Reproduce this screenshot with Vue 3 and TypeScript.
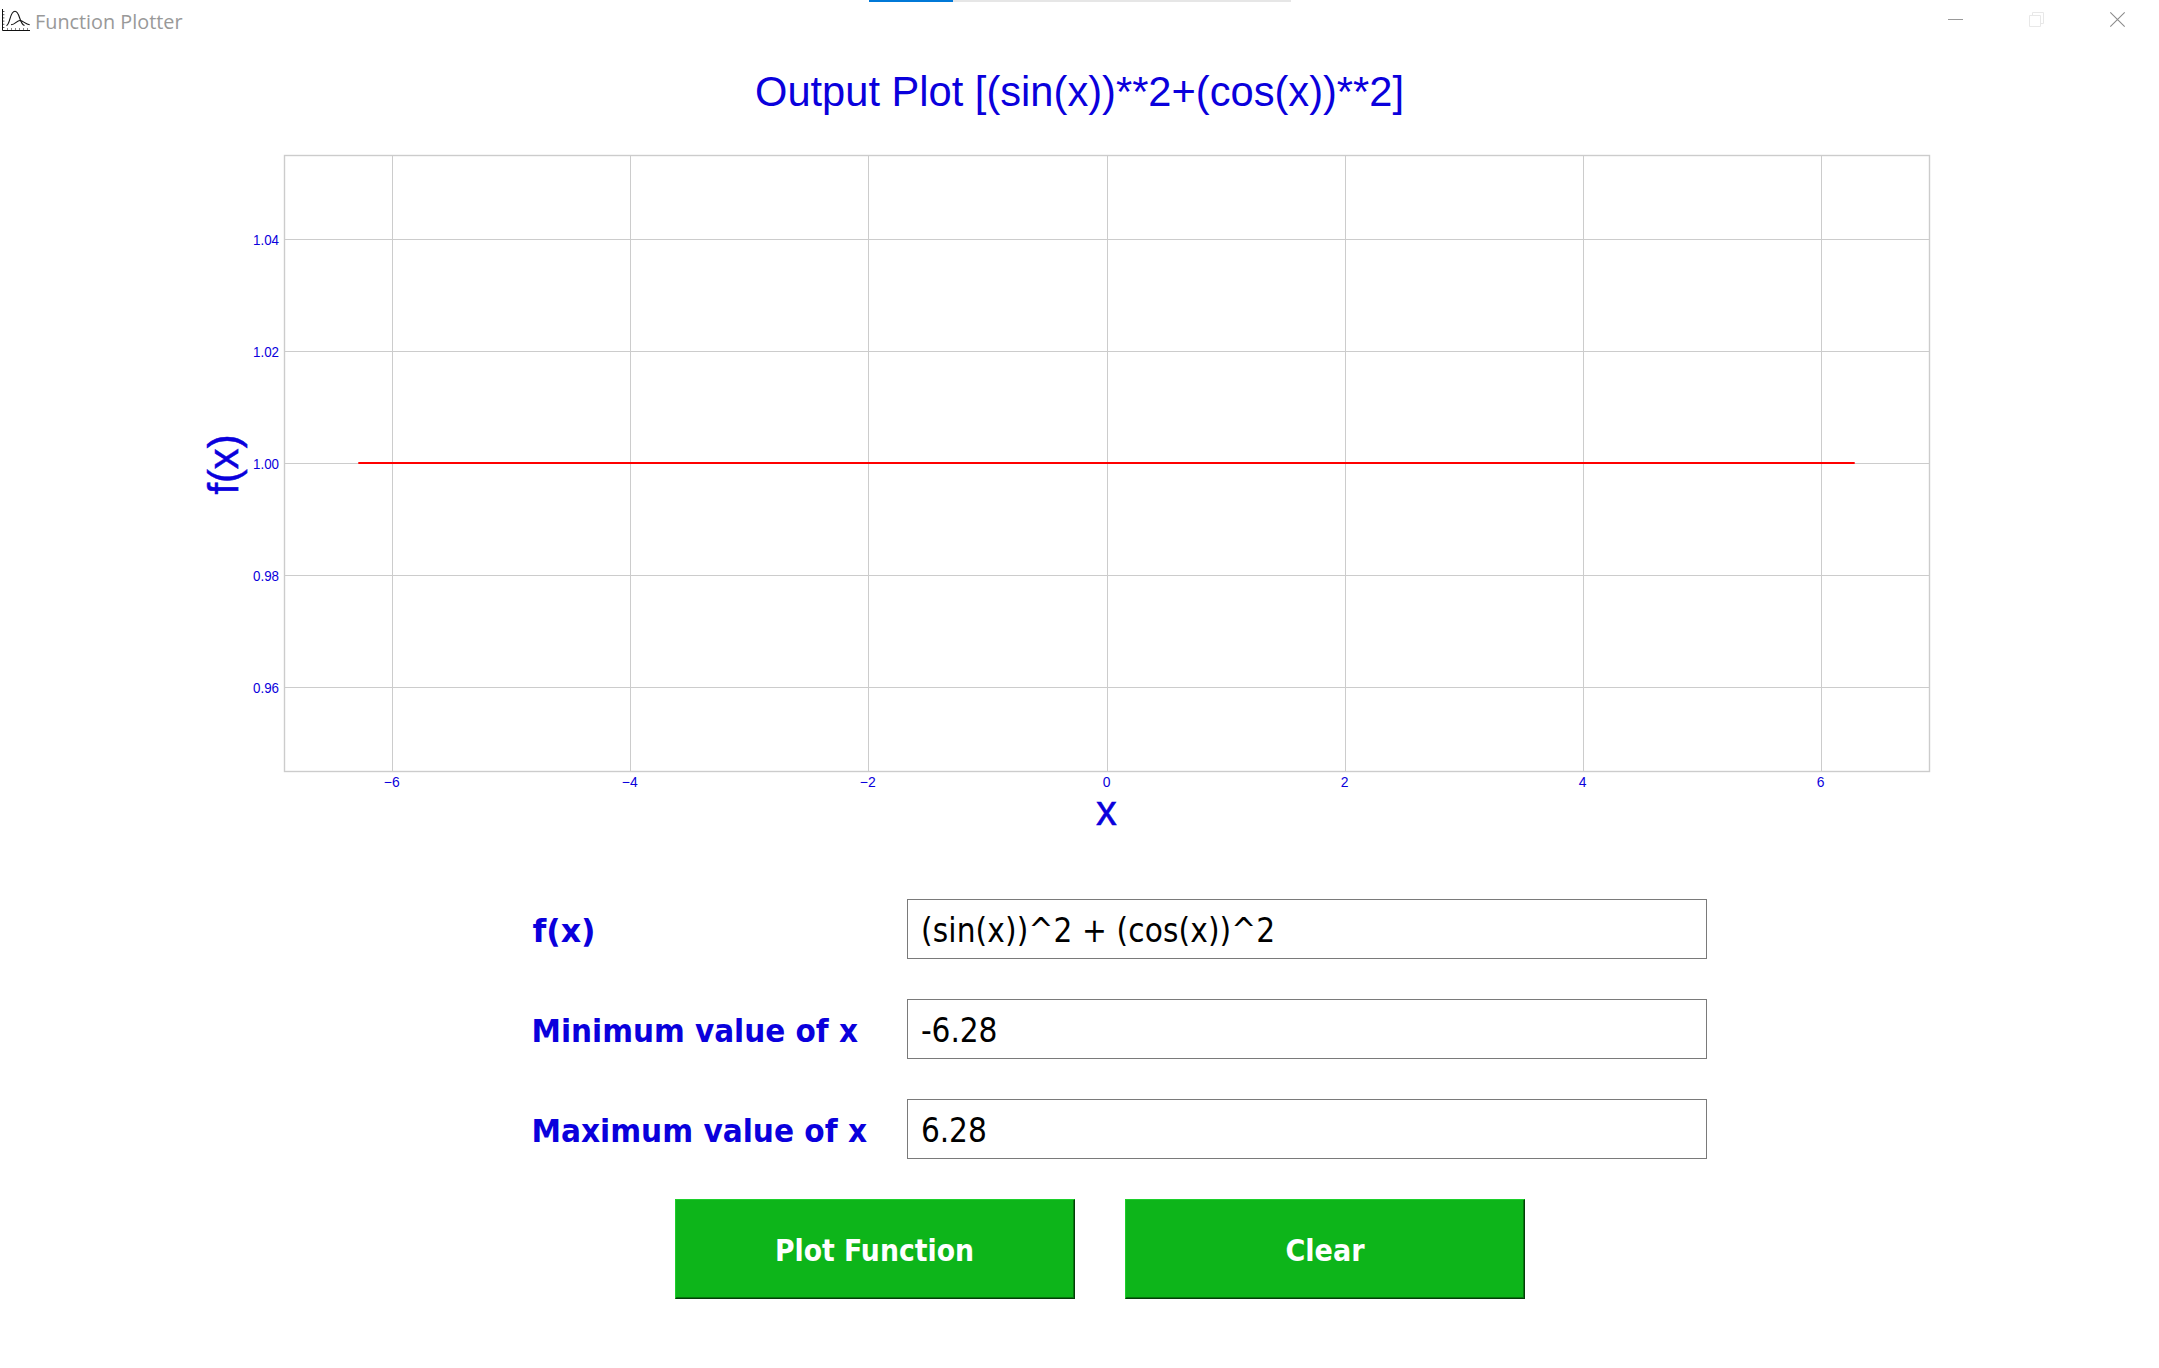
<script setup lang="ts">
import { ref } from 'vue'

interface Tick {
  at: number
  label: string
}

const expression = ref('(sin(x))^2 + (cos(x))^2')
const minX = ref('-6.28')
const maxX = ref('6.28')

const plot = { left: 284.5, right: 1929.5, top: 155.5, bottom: 771.5 }

const xTicks: Tick[] = [
  { at: 392.5, label: '−6' },
  { at: 630.5, label: '−4' },
  { at: 868.5, label: '−2' },
  { at: 1107.5, label: '0' },
  { at: 1345.5, label: '2' },
  { at: 1583.5, label: '4' },
  { at: 1821.5, label: '6' },
]
const yTicks: Tick[] = [
  { at: 239.5, label: '1.04' },
  { at: 351.5, label: '1.02' },
  { at: 463.5, label: '1.00' },
  { at: 575.5, label: '0.98' },
  { at: 687.5, label: '0.96' },
]
</script>

<template>
  <div class="window">
    <div class="progress"><div class="progress-value"></div></div>
    <header class="titlebar">
      <svg class="app-icon" width="34" height="44" viewBox="0 0 34 44" fill="none" stroke="#111">
        <path d="M2.5 9V30.5H30" />
        <path d="M3.8 11V28" stroke-dasharray="1 2.2" />
        <path d="M7 29H29" stroke-dasharray="1 3" />
        <path d="M6.5 25.7C10.5 24 9.6 11.3 15 11.3C20 11.3 19 23.5 24.5 25.5" stroke-width="1.1" />
        <path d="M11 24.7C15.5 24.7 16.5 20.5 20 20.5C23.5 20.5 25 24.3 29.7 24.7" stroke-width="1.1" />
      </svg>
      <svg class="caption" width="160" height="44">
        <text x="1" y="28.5" textLength="147.500" lengthAdjust="spacingAndGlyphs">Function Plotter</text>
      </svg>
      <svg class="controls" width="259" height="44" viewBox="0 0 259 44" fill="none">
        <path d="M48 19.5H63" stroke="#999" />
        <path d="M129.500 15.500H140.500V26.500H129.500Z M132.500 15V12.500H143.500V23.500H141" stroke="#e8e8e8" />
        <path d="M210.300 12.300L224.700 26.700M224.700 12.300L210.300 26.700" stroke="#8c8c8c" stroke-width="1.1" />
      </svg>
    </header>

    <svg class="figure" width="2159" height="855" viewBox="0 44 2159 855">
      <text class="heading" x="755" y="106" textLength="649" lengthAdjust="spacingAndGlyphs">Output Plot [(sin(x))**2+(cos(x))**2]</text>
      <g class="grid">
        <line v-for="t in xTicks" :key="t.label" :x1="t.at" :x2="t.at" :y1="plot.top" :y2="plot.bottom" />
        <line v-for="t in yTicks" :key="t.label" :x1="plot.left" :x2="plot.right" :y1="t.at" :y2="t.at" />
      </g>
      <line class="curve" x1="358.300" x2="1854.700" y1="463" y2="463" />
      <rect class="frame" :x="plot.left" :y="plot.top" :width="plot.right - plot.left" :height="plot.bottom - plot.top" />
      <g class="ticks">
        <text v-for="t in xTicks" :key="t.label" :x="t.at - 0.8" y="787" text-anchor="middle">{{ t.label }}</text>
        <text v-for="t in yTicks" :key="t.label" x="253" :y="t.at + 5.300" textLength="26" lengthAdjust="spacingAndGlyphs">{{ t.label }}</text>
      </g>
      <text class="axis" x="1106.500" y="825" text-anchor="middle">x</text>
      <text class="axis" transform="translate(237.500 464.500) rotate(-90)" text-anchor="middle">f(x)</text>
    </svg>

    <form class="form" @submit.prevent>
      <label class="row">
        <svg class="label" width="375" height="60"><text x="0.500" y="43" textLength="63" lengthAdjust="spacingAndGlyphs">f(x)</text></svg>
        <input v-model="expression" class="field expr" type="text" spellcheck="false" />
      </label>
      <label class="row">
        <svg class="label" width="375" height="60"><text x="-0.500" y="43" textLength="326.500" lengthAdjust="spacingAndGlyphs">Minimum value of x</text></svg>
        <input v-model="minX" class="field" type="text" />
      </label>
      <label class="row">
        <svg class="label" width="375" height="60"><text x="-0.500" y="43" textLength="335.500" lengthAdjust="spacingAndGlyphs">Maximum value of x</text></svg>
        <input v-model="maxX" class="field" type="text" />
      </label>
    </form>

    <div class="actions">
      <button class="action" type="button">
        <svg width="396" height="96"><text x="98" y="58.500" textLength="199" lengthAdjust="spacingAndGlyphs">Plot Function</text></svg>
      </button>
      <button class="action" type="button">
        <svg width="396" height="96"><text x="158.500" y="58.500" textLength="79" lengthAdjust="spacingAndGlyphs">Clear</text></svg>
      </button>
    </div>
  </div>
</template>

<style>
html,
body {
  margin: 0;
  overflow: hidden;
  background: #fff;
}
</style>

<style scoped>
.window {
  position: relative;
  display: flex;
  flex-direction: column;
  width: 2159px;
  height: 1368px;
  overflow: hidden;
  background: #fff;
}
svg {
  display: block;
  flex: none;
}
.progress {
  position: absolute;
  top: 0;
  left: 869px;
  width: 422px;
  height: 2px;
  background: #e6e6e6;
}
.progress-value {
  width: 84px;
  height: 2px;
  background: #0078d7;
}
.titlebar {
  display: flex;
  height: 44px;
}
.controls {
  margin-left: auto;
}
.caption text {
  font: 20px 'Open Sans', 'Noto Sans', sans-serif;
  fill: #999;
}
.heading,
.axis {
  font: 41.67px 'Liberation Sans', Arial, sans-serif;
  fill: #0a00dc;
}
.axis {
  stroke: #0a00dc;
  stroke-width: 0.5px;
}
.ticks text {
  font: 13.9px 'Liberation Sans', Arial, sans-serif;
  fill: #0a00dc;
}
.grid line {
  stroke: #ccc;
  stroke-width: 1px;
}
.frame {
  fill: none;
  stroke: #ccc;
  stroke-width: 1.4px;
}
.curve {
  stroke: #f00;
  stroke-width: 2px;
}
.form {
  display: flex;
  flex-direction: column;
  gap: 40px;
  margin-left: 532px;
}
.row {
  display: flex;
}
.label {
  overflow: visible;
}
.label text {
  font: bold 32.5px 'DejaVu Sans Condensed', 'DejaVu Sans', sans-serif;
  fill: #0a00dc;
}
.field {
  box-sizing: border-box;
  width: 800px;
  height: 60px;
  margin: 0;
  padding: 2px 0 0 13px;
  border: 1px solid #7a7a7a;
  border-radius: 0;
  outline: none;
  background: #fff;
  color: #000;
  font: 33px 'DejaVu Sans Condensed', 'DejaVu Sans', sans-serif;
  letter-spacing: -0.1px;
}
.expr {
  letter-spacing: 0.12px;
}
.actions {
  display: flex;
  gap: 50px;
  margin: 40px 0 0 675px;
}
.action {
  box-sizing: border-box;
  width: 400px;
  height: 100px;
  padding: 1px 0 0 1px;
  border: 1px solid;
  border-color: #1ccf2b #043d07 #043d07 #1ccf2b;
  border-radius: 0;
  background: #0db51a;
  box-shadow: inset -1px -1px 0 #08750f;
}
.action text {
  font: bold 29.500px 'DejaVu Sans Condensed', 'DejaVu Sans', sans-serif;
  fill: #fff;
}
</style>
